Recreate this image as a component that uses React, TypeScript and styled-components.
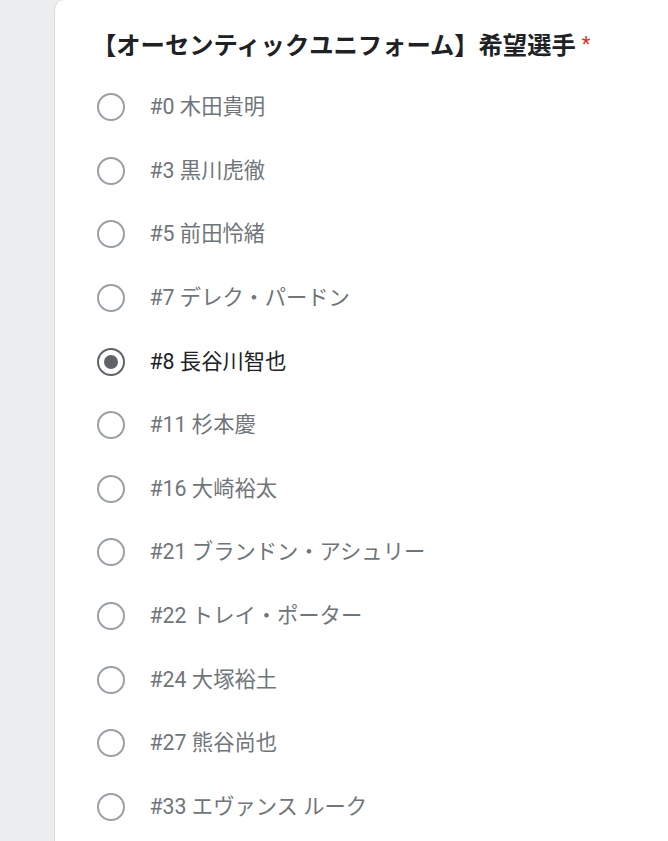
// Packages
import { FunctionComponent } from 'react';
import styled, { createGlobalStyle } from 'styled-components';

const GlobalStyle = createGlobalStyle`
    html, body {
        margin: 0;
        padding: 0;
        background: #ecedef;
        font-family: Roboto, "Noto Sans CJK JP", sans-serif;
    }
`;

interface IPlayer {
    label: string,
    selected?: boolean,
}

const players: IPlayer[] = [
    { label: '#0 木田貴明' },
    { label: '#3 黒川虎徹' },
    { label: '#5 前田怜緒' },
    { label: '#7 デレク・パードン' },
    { label: '#8 長谷川智也', selected: true },
    { label: '#11 杉本慶' },
    { label: '#16 大崎裕太' },
    { label: '#21 ブランドン・アシュリー' },
    { label: '#22 トレイ・ポーター' },
    { label: '#24 大塚裕土' },
    { label: '#27 熊谷尚也' },
    { label: '#33 エヴァンス ルーク' },
];

const Option: FunctionComponent<IPlayer> = (p) => (
    <StyledOption>
        <Radio $checked={!!p.selected}>
            {p.selected && <span className="dot" />}
        </Radio>
        <OptionLabel $checked={!!p.selected}>{p.label}</OptionLabel>
    </StyledOption>
);

export default function App() {
    return (
        <>
            <GlobalStyle />
            <Page>
                <Card>
                    <Title>
                        【オーセンティックユニフォーム】希望選手
                        <span className="required">*</span>
                    </Title>
                    <OptionList>
                        {players.map((pl) => (
                            <Option key={pl.label} {...pl} />
                        ))}
                    </OptionList>
                </Card>
            </Page>
        </>
    );
}

const Page = styled.div`
    min-height: 841px;
    padding-left: 54px;
    display: flex;
`;

const Card = styled.div`
    flex: 1;
    background: #ffffff;
    border-left: 1px solid #d6d8dc;
    border-top-left-radius: 10px;
    padding: 28px 0 0 37px;
    overflow: hidden;
`;

const Title = styled.div`
    font-family: Roboto, "Noto Sans CJK JP", sans-serif;
    font-size: 24.3px;
    line-height: 32px;
    font-weight: 700;
    color: #202124;

    .required {
        color: #d93025;
        font-size: 20px;
        font-weight: 400;
        margin-left: 6px;
        vertical-align: 3px;
    }
`;

const OptionList = styled.div`
    display: flex;
    flex-direction: column;
    margin-top: 13.2px;
`;

const StyledOption = styled.div`
    display: flex;
    align-items: center;
    height: 63.64px;
    padding-left: 4.5px;
`;

const Radio = styled.div<{ $checked: boolean }>`
    box-sizing: border-box;
    width: 28px;
    height: 28px;
    border-radius: 50%;
    border: 2.8px solid ${(p) => (p.$checked ? '#5f6368' : '#9aa0a6')};
    display: flex;
    align-items: center;
    justify-content: center;
    flex-shrink: 0;

    .dot {
        width: 14px;
        height: 14px;
        border-radius: 50%;
        background: #5f6368;
    }
`;

const OptionLabel = styled.span<{ $checked: boolean }>`
    margin-left: 25px;
    font-size: 21.3px;
    line-height: 28px;
    color: ${(p) => (p.$checked ? '#202124' : '#70757a')};
    white-space: nowrap;
`;
